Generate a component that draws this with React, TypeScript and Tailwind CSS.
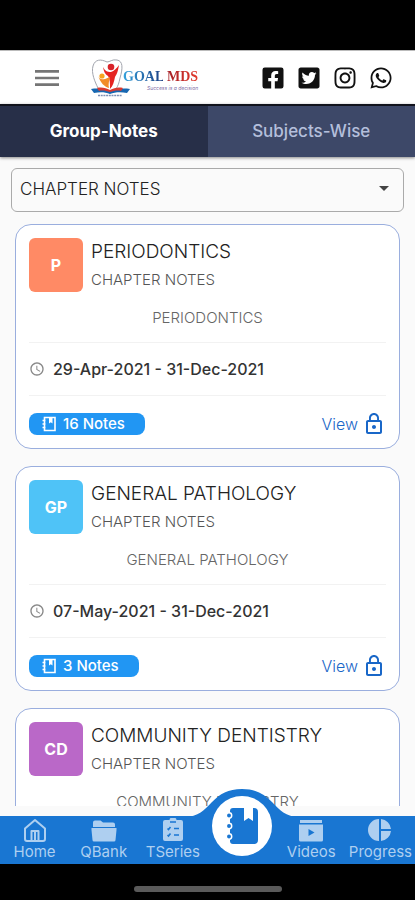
import { useState } from "react";
import { FaFacebookSquare, FaTwitterSquare, FaInstagram, FaWhatsapp } from "react-icons/fa";
import { MdAccessTime, MdArrowDropDown, MdLockOutline, MdMenu } from "react-icons/md";

type Note = {
  title: string;
  initials: string;
  color: string;
  dates?: string;
  count?: number;
};

const notes: Note[] = [
  { title: "PERIODONTICS", initials: "P", color: "bg-[#ff8a65]", dates: "29-Apr-2021 - 31-Dec-2021", count: 16 },
  { title: "GENERAL PATHOLOGY", initials: "GP", color: "bg-[#4fc3f7]", dates: "07-May-2021 - 31-Dec-2021", count: 3 },
  { title: "COMMUNITY DENTISTRY", initials: "CD", color: "bg-[#ba68c8]" },
];

function NotebookIcon({ className }: { className?: string }) {
  return (
    <svg viewBox="0 0 32 36" className={className} aria-hidden="true">
      <path fill="currentColor" d="M7 0h11v13l4.500-3 4.500 3V0h1a4 4 0 0 1 4 4v28a4 4 0 0 1-4 4H7a3 3 0 0 1-3-3V3a3 3 0 0 1 3-3z" />
      <g fill="currentColor" stroke="#fff" strokeWidth="1.500">
        <circle cx="3" cy="7.500" r="2.700" />
        <circle cx="3" cy="18" r="2.700" />
        <circle cx="3" cy="28.500" r="2.700" />
      </g>
    </svg>
  );
}

function NotebookOutlineIcon({ className }: { className?: string }) {
  return (
    <svg viewBox="0 0 16 16" className={className} fill="none" stroke="currentColor" strokeWidth="1.600" aria-hidden="true">
      <path d="M3.500 1.500h10.500v13H3.500zM1.500 4.500h3M1.500 8h3M1.500 11.500h3" />
      <path d="M8 1.500h3.500v6L9.800 6.200 8 7.500z" fill="currentColor" stroke="none" />
    </svg>
  );
}

function HomeIcon() {
  return (
    <svg viewBox="0 0 24 24" className="size-6" fill="none" stroke="currentColor" strokeWidth="2" strokeLinejoin="round" aria-hidden="true">
      <path d="M2 10.500 12 2l10 8.500V21a2 2 0 0 1-2 2H4a2 2 0 0 1-2-2z" />
      <path d="M8.500 23V13h7v10M12 14v9" />
    </svg>
  );
}

function FolderIcon() {
  return (
    <svg viewBox="0 0 28 24" className="h-6 w-7" fill="currentColor" aria-hidden="true">
      <path d="M3 9V4.500A2 2 0 0 1 5 2.500h5.500l2.500 2h10a2 2 0 0 1 2 2V9z" />
      <path d="M1.500 10h25v2l-1 10a1.500 1.500 0 0 1-1.500 1.500H4A1.500 1.500 0 0 1 2.500 22l-1-10z" />
    </svg>
  );
}

function ClipboardIcon() {
  return (
    <svg viewBox="0 0 24 24" className="size-6" aria-hidden="true">
      <path fill="currentColor" d="M4 2h4.500a3.500 2.500 0 0 1 7 0H20a2 2 0 0 1 2 2v17a2 2 0 0 1-2 2H4a2 2 0 0 1-2-2V4a2 2 0 0 1 2-2z" />
      <path fill="none" stroke="#1976d2" strokeWidth="1.600" d="M9 4h6M6.500 10.500l1 1 2-2.500M6.500 17l1 1 2-2.500M13 10.500h5M13 17h5" />
    </svg>
  );
}

function VideosIcon() {
  return (
    <svg viewBox="0 0 26 24" className="h-6 w-7" aria-hidden="true">
      <path fill="currentColor" d="M2 2h22v3H2zM1 6.500h24V22a1.500 1.500 0 0 1-1.500 1.500h-21A1.500 1.500 0 0 1 1 22z" />
      <path fill="#1976d2" d="m10.500 11 6 3.500-6 3.500z" />
    </svg>
  );
}

function PieIcon() {
  return (
    <svg viewBox="0 0 24 24" className="size-6" fill="currentColor" aria-hidden="true">
      <path d="M11 1v22a11 11 0 0 1 0-22zM13 1a11 11 0 0 1 10 10H13zM13 13h10a11 11 0 0 1-10 10z" />
    </svg>
  );
}

function Logo() {
  return (
    <a href="#home" aria-label="Goal MDS" className="flex items-center">
      <svg viewBox="0 0 40 40" className="size-10" aria-hidden="true">
        <path d="M7 30C4 24 0 15 2 8 4 1 10 1 16 4c3 0 5-3 10-2 6 1 6 8 3 18-1 5-2 8-4 11" fill="#fff" stroke="#a2a5ae" strokeWidth="1" />
        <circle cx="20" cy="9" r="3.300" fill="#d8232a" />
        <path d="M12 9c2 4 4 5 8 5 3-1 6-4 8-7-1 6-2 9-4 12-1 5-2 9-5 12 0-6 0-10-2-13-3-2-4-4-5-9z" fill="#e52421" />
        <circle cx="11" cy="18" r="2.600" fill="#f7a41d" />
        <path d="M7 17c1 4 3 5 7 4l5-2c-1 4-2 8-1 11-4-1-9-5-11-13z" fill="#f28c28" />
        <path d="M0 31c8-1 13 0 19 2 6-2 12-3 20-2l-3 4c-6-1-12-1-17 1-5-2-10-2-16-1z" fill="#1767b1" />
        <path d="M6 30c5-1 9 0 13 2 4-2 8-3 13-2l-2 3c-4-1-7 0-11 1-4-1-7-2-11-1z" fill="#d93a30" />
        <path d="M7 37.500h24" stroke="#7b8fb5" strokeWidth="1.500" strokeDasharray="2 .7" />
      </svg>
      <span className="-ml-2 flex flex-col items-end pt-1">
        <span className="font-['Liberation_Serif',serif] text-[14px] leading-4 font-bold whitespace-nowrap">
          <span className="bg-linear-to-r from-[#36a3dd] to-[#1c3e83] bg-clip-text text-transparent">GOAL</span>
          <span className="bg-linear-to-r from-[#9c1c25] to-[#e43b2d] bg-clip-text text-transparent"> MDS</span>
        </span>
        <span className="text-[5px] leading-[6px] text-[#7e6da5] italic">Success is a decision</span>
      </span>
    </a>
  );
}

function Header() {
  return (
    <header className="flex h-[54px] shrink-0 items-center justify-between border-t border-[#bbb] bg-white pr-[22px] pl-[31px]">
      <div className="flex items-center gap-7">
        <button type="button" aria-label="Open menu" className="text-[#757575]">
          <MdMenu className="size-8" />
        </button>
        <Logo />
      </div>
      <nav aria-label="Social links" className="flex items-center gap-3 text-[#111]">
        <a href="#facebook" aria-label="Facebook"><FaFacebookSquare className="size-6" /></a>
        <a href="#twitter" aria-label="Twitter"><FaTwitterSquare className="size-6" /></a>
        <a href="#instagram" aria-label="Instagram"><FaInstagram className="size-6" /></a>
        <a href="#whatsapp" aria-label="WhatsApp"><FaWhatsapp className="size-6" /></a>
      </nav>
    </header>
  );
}

function NoteCard({ note }: { note: Note }) {
  return (
    <article className="shrink-0 rounded-2xl border border-[#9aaede] bg-white px-[13px] pt-[13px] pb-2">
      <div className="flex gap-2">
        <div className={`flex size-[54px] items-center justify-center rounded-md font-bold text-white ${note.color}`}>
          {note.initials}
        </div>
        <div>
          <h2 className="text-[19px] leading-7 font-light text-[#222]">{note.title}</h2>
          <p className="text-[15px] leading-7 font-light text-[#555]">CHAPTER NOTES</p>
        </div>
      </div>
      <p className="mt-2 text-center text-[15px] leading-8 font-light text-[#666]">{note.title}</p>
      {note.dates && (
        <div className="mt-2 flex h-[54px] items-center gap-2 border-y border-[#f2f2f2]">
          <MdAccessTime className="size-4 text-[#888]" />
          <time className="text-base font-medium text-[#333]">{note.dates}</time>
        </div>
      )}
      {note.count && (
        <div className="mt-3 flex h-8 items-center justify-between">
          <span className="flex h-[22px] items-center gap-1.5 rounded-lg bg-[#2196f3] pr-5 pl-3 text-[15px] font-medium text-white">
            <NotebookOutlineIcon className="size-4" />
            {note.count} Notes
          </span>
          <button type="button" className="flex items-center gap-1 font-light text-[#1967c8]">
            View
            <MdLockOutline className="size-6" />
          </button>
        </div>
      )}
    </article>
  );
}

function BottomNav() {
  const item = "flex flex-col items-center text-[#aecff0]";
  const label = "text-[15px] leading-5";
  return (
    <nav aria-label="Main" className="relative grid h-12 shrink-0 grid-cols-6 bg-[#1976d2] pt-[2px]">
      <a href="#home" className={item}><HomeIcon /><span className={label}>Home</span></a>
      <a href="#qbank" className={item}><FolderIcon /><span className={label}>QBank</span></a>
      <a href="#tseries" className={item}><ClipboardIcon /><span className={label}>TSeries</span></a>
      <a href="#notes" aria-label="Notes" aria-current="page" className="relative">
        <svg viewBox="0 0 116 30" className="absolute bottom-full left-1/2 h-[30px] w-[116px] max-w-none -translate-x-1/2" fill="#1976d2" aria-hidden="true">
          <path d="M0 30v-1C15 29 20 22 28 14 36 6 44 1 58 1s22 5 30 13c8 8 13 15 28 15v1z" />
        </svg>
        <span className="absolute bottom-0 left-1/2 flex size-[60px] -translate-x-1/2 -translate-y-2 items-center justify-center rounded-full bg-white text-[#1976d2]">
          <NotebookIcon className="h-9 w-8" />
        </span>
      </a>
      <a href="#videos" className={item}><VideosIcon /><span className={label}>Videos</span></a>
      <a href="#progress" className={item}><PieIcon /><span className={label}>Progress</span></a>
    </nav>
  );
}

export default function App() {
  const [tab, setTab] = useState(0);
  const tabs = ["Group-Notes", "Subjects-Wise"];
  return (
    <div className="flex h-screen flex-col overflow-hidden bg-[#fafafa] font-['Inter',sans-serif]">
      <div className="h-[50px] shrink-0 bg-black" />
      <Header />
      <div role="tablist" className="z-10 grid h-[53px] shrink-0 grid-cols-2 border-t-2 border-[#11131c] shadow-[0_1px_3px_rgba(0,0,0,0.45)]">
        {tabs.map((name, i) => (
          <button
            key={name}
            type="button"
            role="tab"
            aria-selected={tab === i}
            onClick={() => setTab(i)}
            className={tab === i ? "bg-[#272f48] text-[17px] font-bold text-white" : "bg-[#3d4868] text-[17px] font-medium text-[#b4bfdb]"}
          >
            {name}
          </button>
        ))}
      </div>
      <main className="flex min-h-0 flex-1 flex-col overflow-hidden px-[11px] pt-[11px]">
        <div className="relative shrink-0">
          <select aria-label="Note type" className="h-11 w-full appearance-none rounded-md border border-[#aaa] bg-[#fafafa] px-2 text-[17px] font-light text-[#222]">
            <option>CHAPTER NOTES</option>
          </select>
          <MdArrowDropDown className="pointer-events-none absolute top-2 right-2 size-6 text-[#444]" />
        </div>
        <div className="mt-3 flex flex-col gap-[17px] px-1">
          {notes.map((note) => (
            <NoteCard key={note.title} note={note} />
          ))}
        </div>
      </main>
      <div className="h-[10px] shrink-0" />
      <BottomNav />
      <div className="flex h-9 shrink-0 justify-center bg-black pt-[22px]">
        <div className="h-[6px] w-[148px] rounded-full bg-[#5a5a5a]" />
      </div>
    </div>
  );
}
